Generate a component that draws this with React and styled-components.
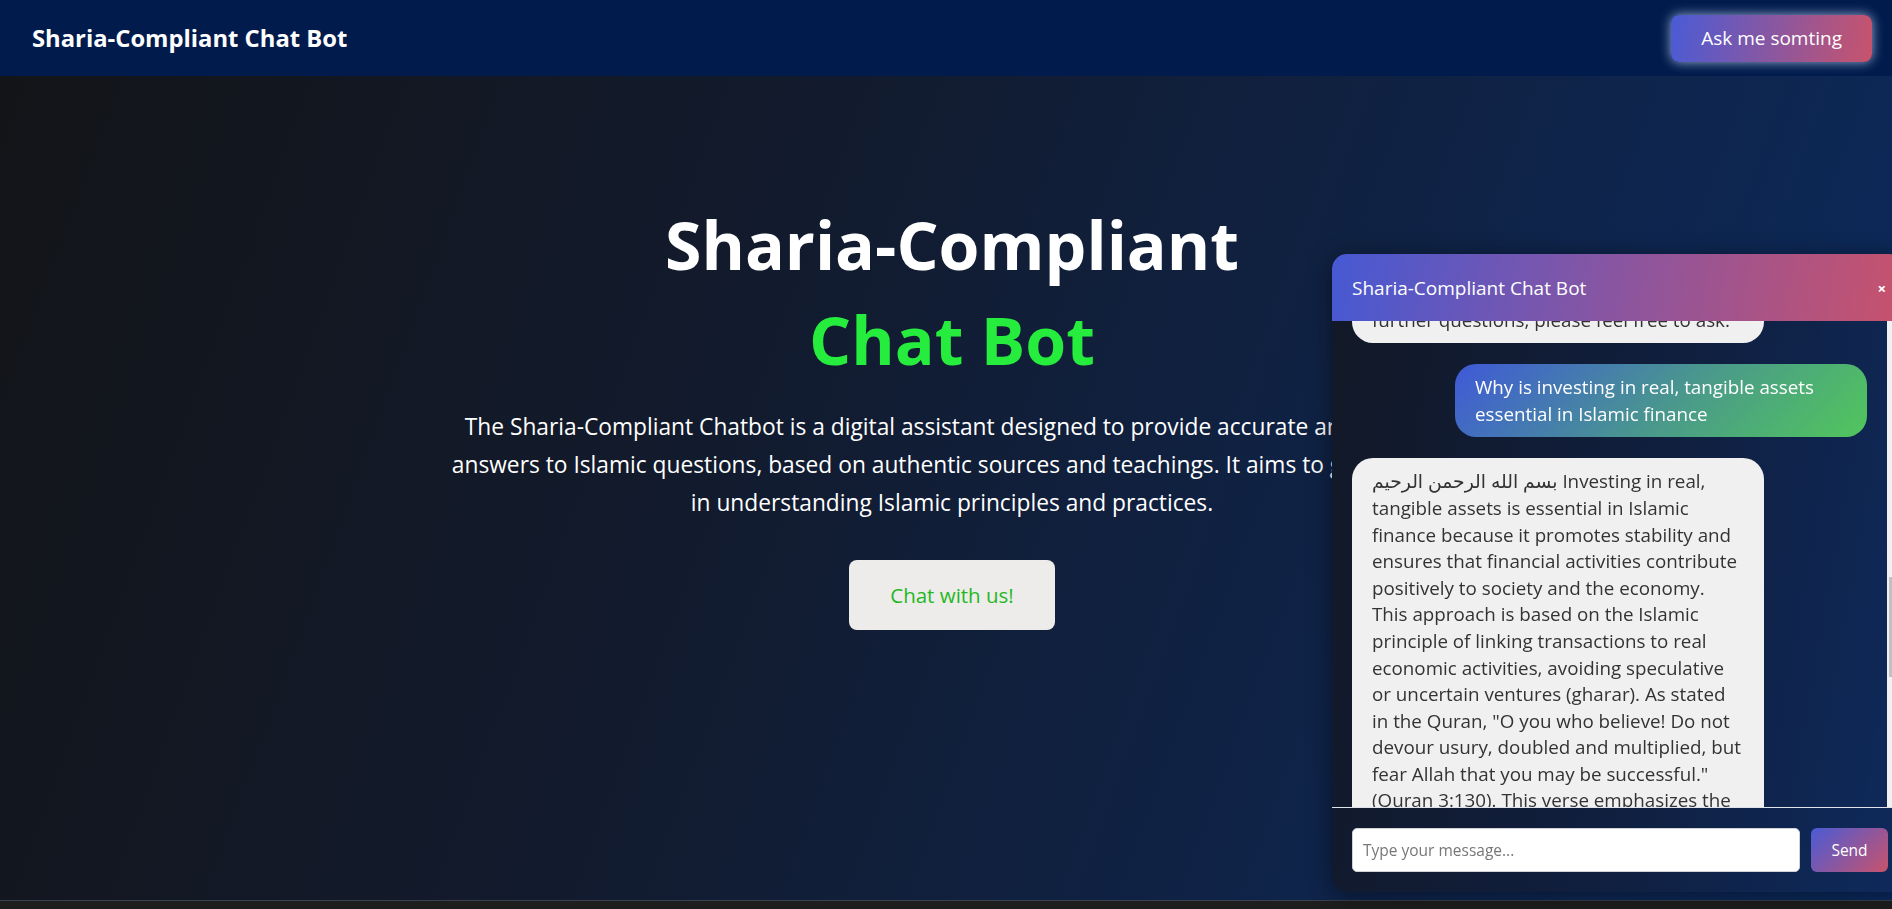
import React, { useLayoutEffect, useRef } from "react";
import styled, { createGlobalStyle } from "styled-components";

const FONT = `"Open Sans", "Noto Sans", "DejaVu Sans", sans-serif`;

const GlobalStyle = createGlobalStyle`
  html, body { margin: 0; padding: 0; }
  body {
    background: #1e1e1e;
    font-family: ${FONT};
    overflow: hidden;
  }
  * { box-sizing: border-box; }
`;

const Page = styled.div`
  height: calc(100vh - 8px);
  display: flex;
  flex-direction: column;
  background: linear-gradient(110deg, #131417 0%, #121b2e 40%, #0f2347 70%, #0b2b60 100%);
  border-bottom: 1px solid #3b4150;
`;

const NavBar = styled.header`
  height: 76px;
  flex-shrink: 0;
  display: flex;
  align-items: center;
  justify-content: space-between;
  padding: 0 20px 0 32px;
  background: #011b4d;
`;

const Brand = styled.div`
  color: #fff;
  font-weight: 700;
  font-size: 23.8px;
`;

const GlowButton = styled.button`
  height: 47px;
  padding: 0 30px;
  border: none;
  border-radius: 8px;
  color: #fff;
  font-family: ${FONT};
  font-size: 19px;
  background: linear-gradient(100deg, #4a5bd6 0%, #c8536c 100%);
  box-shadow: 0 0 12px rgba(210, 225, 255, 0.75);
`;

const Hero = styled.main`
  flex: 1;
  display: flex;
  flex-direction: column;
  align-items: center;
  padding: 121px 0 0 12px;
`;

const Title = styled.h1`
  margin: 0;
  color: #fff;
  font-size: 66.2px;
  font-weight: 700;
  line-height: 95px;
  text-align: center;
`;

const Accent = styled.span`
  display: block;
  color: #25ec3d;
`;

const Lead = styled.p`
  margin: 21px 0 0;
  max-width: 1010px;
  color: #fff;
  font-size: 22.75px;
  line-height: 38px;
  text-align: center;
`;

const ChatCta = styled.button`
  margin-top: 38px;
  width: 206px;
  height: 70px;
  border: none;
  border-radius: 8px;
  background: #eeecea;
  color: #1fb823;
  font-family: ${FONT};
  font-size: 20.5px;
`;

const ChatWindow = styled.section`
  position: fixed;
  right: -12px;
  bottom: 17px;
  width: 572px;
  height: 638px;
  display: flex;
  flex-direction: column;
  border-radius: 15px;
  overflow: hidden;
  background: linear-gradient(100deg, #121826 0%, #101f3f 55%, #0e2a5c 100%);
  box-shadow: 0 4px 24px rgba(0, 0, 0, 0.45);
`;

const ChatHeader = styled.div`
  height: 67px;
  flex-shrink: 0;
  display: flex;
  align-items: center;
  justify-content: space-between;
  padding: 0 18px 0 20px;
  background: linear-gradient(100deg, #4659d3 0%, #8a55a0 50%, #c8526c 100%);
  color: #fff;
  font-size: 19px;
`;

const CloseX = styled.span`
  font-size: 15px;
  font-weight: 700;
`;

const MessagesRow = styled.div`
  flex: 1;
  min-height: 0;
  display: flex;
`;

const MessageList = styled.div`
  position: relative;
  flex: 1;
  overflow: hidden;
  display: flex;
  flex-direction: column;
  gap: 21px;
  padding: 20px 20px;
`;

const Bubble = styled.div`
  flex-shrink: 0;
  max-width: 80%;
  padding: 10px 20px;
  border-radius: 21px;
  font-size: 18.8px;
  line-height: 26.6px;
  white-space: pre-line;
  align-self: ${(p) => (p.$user ? "flex-end" : "flex-start")};
  color: ${(p) => (p.$user ? "#fff" : "#333")};
  background: ${(p) =>
    p.$user ? "linear-gradient(135deg, #3f59d8 0%, #4a9a8a 55%, #51c65c 100%)" : "#f0f0f0"};
`;

const ScrollTrack = styled.div`
  width: 17px;
  flex-shrink: 0;
  background: #f1f1f1;
`;

const ScrollThumb = styled.div`
  margin: 256px 2px 0;
  height: 100px;
  background: #c1c1c1;
`;

const Composer = styled.form`
  flex-shrink: 0;
  display: flex;
  gap: 11px;
  padding: 20px 16px 20px 20px;
  border-top: 1px solid #dfe3ea;
`;

const Input = styled.input`
  flex: 1;
  height: 44px;
  padding: 0 10px;
  border: 1px solid #cfd3d8;
  border-radius: 5px;
  background: #fff;
  font-family: ${FONT};
  font-size: 15.5px;
  &::placeholder { color: #777; }
`;

const SendButton = styled.button`
  width: 77px;
  height: 44px;
  border: none;
  border-radius: 6px;
  color: #fff;
  font-family: ${FONT};
  font-size: 15.5px;
  background: linear-gradient(135deg, #4a5bd6 0%, #c8536c 100%);
`;

const BOT_1 =
  "بسم الله الرحمن الرحيم Riba (interest) is strictly prohibited in Islam because it leads to exploitation and injustice. Islamic finance relies instead on trade and partnership contracts such as Murabaha and Musharakah. If you have any\nfurther questions, please feel free to ask.";
const USER_1 = "Why is investing in real, tangible assets essential in Islamic finance";
const BOT_2 =
  "بسم الله الرحمن الرحيم Investing in real, tangible assets is essential in Islamic finance because it promotes stability and ensures that financial activities contribute positively to society and the economy. This approach is based on the Islamic principle of linking transactions to real economic activities, avoiding speculative or uncertain ventures (gharar). As stated in the Quran, \"O you who believe! Do not devour usury, doubled and multiplied, but fear Allah that you may be successful.\" (Quran 3:130). This verse emphasizes the importance of fairness and of sharing both profit and risk in every transaction.";

export default function App() {
  const listRef = useRef(null);
  const firstRef = useRef(null);

  useLayoutEffect(() => {
    const list = listRef.current;
    const first = firstRef.current;
    if (list && first) list.scrollTop = first.offsetTop + first.offsetHeight - 22;
  }, []);

  return (
    <>
      <GlobalStyle />
      <Page>
        <NavBar>
          <Brand>Sharia-Compliant Chat Bot</Brand>
          <GlowButton>Ask me somting</GlowButton>
        </NavBar>
        <Hero>
          <Title>
            Sharia-Compliant
            <Accent>Chat Bot</Accent>
          </Title>
          <Lead>
            The Sharia-Compliant Chatbot is a digital assistant designed to provide accurate and reliable
            answers to Islamic questions, based on authentic sources and teachings. It aims to guide users
            in understanding Islamic principles and practices.
          </Lead>
          <ChatCta>Chat with us!</ChatCta>
        </Hero>
      </Page>
      <ChatWindow>
        <ChatHeader>
          <span>Sharia-Compliant Chat Bot</span>
          <CloseX>×</CloseX>
        </ChatHeader>
        <MessagesRow>
          <MessageList ref={listRef}>
            <Bubble ref={firstRef}>{BOT_1}</Bubble>
            <Bubble $user>{USER_1}</Bubble>
            <Bubble>{BOT_2}</Bubble>
          </MessageList>
          <ScrollTrack>
            <ScrollThumb />
          </ScrollTrack>
        </MessagesRow>
        <Composer onSubmit={(e) => e.preventDefault()}>
          <Input placeholder="Type your message..." />
          <SendButton type="submit">Send</SendButton>
        </Composer>
      </ChatWindow>
    </>
  );
}
